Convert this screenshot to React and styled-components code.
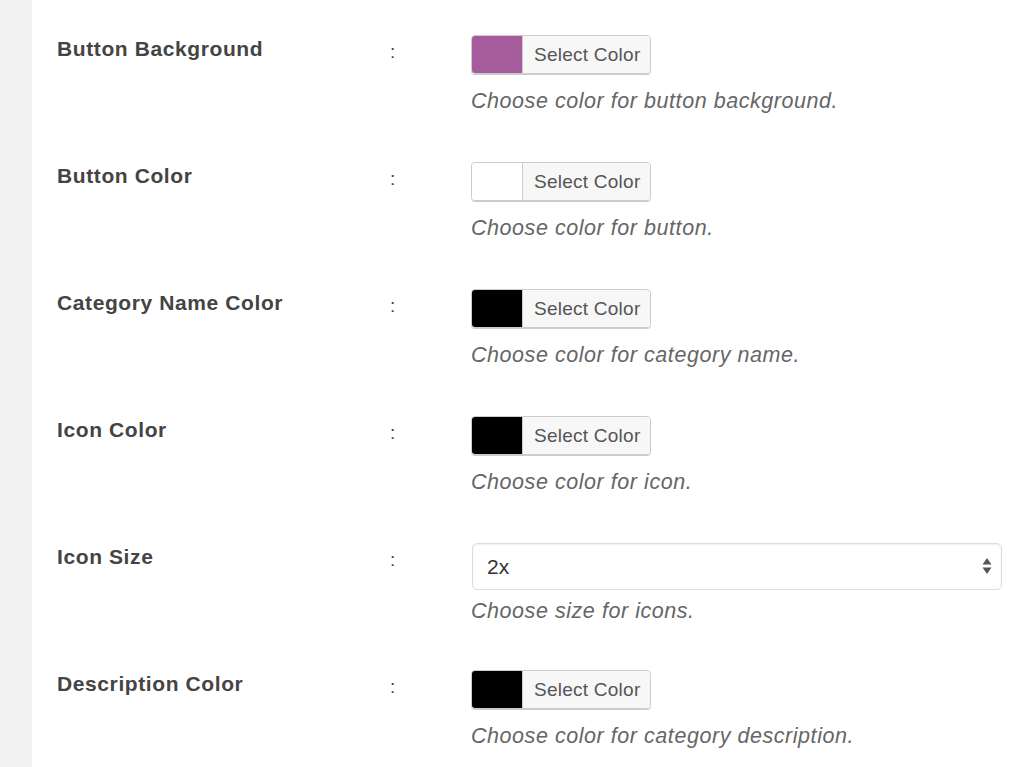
import styled, { createGlobalStyle } from "styled-components";

const GlobalStyle = createGlobalStyle`
    html, body {
        margin: 0;
        padding: 0;
        background: #f1f1f1;
    }
    body {
        font-family: "Liberation Sans", Arial, sans-serif;
    }
`;

const settings = [
    { label: "Button Background", type: "color", color: "#a65b9c", note: "Choose color for button background." },
    { label: "Button Color", type: "color", color: "#ffffff", note: "Choose color for button." },
    { label: "Category Name Color", type: "color", color: "#000000", note: "Choose color for category name." },
    { label: "Icon Color", type: "color", color: "#000000", note: "Choose color for icon." },
    { label: "Icon Size", type: "select", value: "2x", note: "Choose size for icons." },
    { label: "Description Color", type: "color", color: "#000000", note: "Choose color for category description." },
];

const App = () => {
    return (
        <>
            <GlobalStyle/>
            <Page>
                <Sidebar/>
                <Content>
                    {settings.map((item) => (
                        <Row key={item.label}>
                            <Label>{item.label}</Label>
                            <Colon>:</Colon>
                            <Field>
                                {item.type === "color" ? (
                                    <ColorButton>
                                        <Swatch color={item.color}/>
                                        <ColorText>Select Color</ColorText>
                                    </ColorButton>
                                ) : (
                                    <SelectWrap>
                                        <Select defaultValue={item.value}>
                                            <option>1x</option>
                                            <option>2x</option>
                                            <option>3x</option>
                                        </Select>
                                        <Arrows width="10" height="18" viewBox="0 0 10 18">
                                            <path d="M5 1 L9.5 7.5 L0.5 7.5 Z" fill="#555"/>
                                            <path d="M5 17 L9.5 10.5 L0.5 10.5 Z" fill="#555"/>
                                        </Arrows>
                                    </SelectWrap>
                                )}
                                <Note tight={item.type === "select"}>{item.note}</Note>
                            </Field>
                        </Row>
                    ))}
                </Content>
            </Page>
        </>
    );
};

const Page = styled.div`
    display: flex;
    min-height: 767px;
`;

const Sidebar = styled.div`
    width: 32px;
    flex-shrink: 0;
    background: #f1f1f1;
`;

const Content = styled.div`
    flex: 1;
    background: #ffffff;
    padding: 35px 22px 0 25px;
    display: grid;
    grid-auto-rows: 127px;
`;

const Row = styled.div`
    display: grid;
    grid-template-columns: 333px 81px 1fr;
    align-items: start;
`;

const Label = styled.div`
    font-size: 21px;
    font-weight: bold;
    letter-spacing: 0.6px;
    color: #444;
    line-height: 28px;
`;

const Colon = styled.div`
    font-size: 19px;
    color: #444;
    line-height: 34px;
`;

const Field = styled.div`
    display: flex;
    flex-direction: column;
    align-items: flex-start;
`;

const ColorButton = styled.div`
    display: flex;
    height: 39px;
    box-sizing: border-box;
    border: 1px solid #ccc;
    border-radius: 4px;
    box-shadow: 0 1px 0 #ccc;
    overflow: hidden;
`;

const Swatch = styled.div`
    width: 50px;
    background: ${(p) => p.color};
`;

const ColorText = styled.div`
    display: flex;
    align-items: center;
    padding: 0 9px 0 11px;
    border-left: 1px solid #ccc;
    background: #f7f7f7;
    color: #555;
    font-size: 19px;
    letter-spacing: 0.25px;
`;

const Note = styled.div`
    margin-top: ${(p) => (p.tight ? "7px" : "13px")};
    font-size: 21.5px;
    font-style: italic;
    letter-spacing: 0.55px;
    color: #666;
    line-height: 28px;
`;

const SelectWrap = styled.div`
    position: relative;
    width: 530px;
    margin-left: 1px;
`;

const Select = styled.select`
    appearance: none;
    -webkit-appearance: none;
    width: 100%;
    height: 47px;
    box-sizing: border-box;
    border: 1px solid #ddd;
    border-radius: 5px;
    background: #fff;
    box-shadow: inset 0 1px 2px rgba(0, 0, 0, 0.07);
    padding: 0 14px;
    font-family: "Liberation Sans", Arial, sans-serif;
    font-size: 21px;
    color: #333;
    outline: none;
`;

const Arrows = styled.svg`
    position: absolute;
    right: 10px;
    top: 14px;
    pointer-events: none;
`;

export default App;
